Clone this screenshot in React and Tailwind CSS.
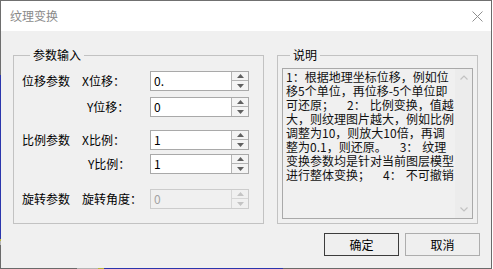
import React from "react";

function Tri({ up, color }) {
  return (
    <svg width="7" height="4" viewBox="0 0 7 4" className="block">
      {up ? (
        <polygon points="0,4 7,4 3.5,0" fill={color} />
      ) : (
        <polygon points="0,0 7,0 3.5,4" fill={color} />
      )}
    </svg>
  );
}

function Spin({ value, disabled }) {
  const arrow = disabled ? "#c4c4c4" : "#606060";
  return (
    <div
      className={`flex w-[99px] h-[20px] border ${
        disabled ? "border-[#cccccc] bg-[#f0f0f0]" : "border-[#a9a9a9] bg-white"
      }`}
    >
      <div
        className={`flex-1 flex items-center pl-[3px] text-[12px] leading-[14px] ${
          disabled ? "text-[#a3a3a3]" : "text-black"
        }`}
      >
        {value}
      </div>
      <div
        className={`w-[17px] flex flex-col border-l ${
          disabled ? "border-[#d6d6d6] bg-[#f0f0f0]" : "border-[#b4b4b4] bg-[#f4f4f4]"
        }`}
      >
        <div
          className={`h-[9px] flex items-center justify-center border-b ${
            disabled ? "border-[#d6d6d6]" : "border-[#b4b4b4]"
          }`}
        >
          <Tri up color={arrow} />
        </div>
        <div className="flex-1 flex items-center justify-center">
          <Tri color={arrow} />
        </div>
      </div>
    </div>
  );
}

function Row({ group, label, indent, value, disabled, className }) {
  return (
    <div className={`flex items-center h-[20px] ${className}`}>
      <div className="w-[60px] whitespace-nowrap">{group}</div>
      <div className={`w-[68px] whitespace-nowrap ${indent}`}>{label}</div>
      <Spin value={value} disabled={disabled} />
    </div>
  );
}

const Gap = () => <span className="inline-block w-[13px]" />;
const Sp = () => <span className="inline-block w-[4px]" />;

export default function App() {
  return (
    <div className="w-[493px] h-[269px] bg-white flex font-['Noto_Sans_CJK_SC',sans-serif] text-[12px] leading-[16px] text-black overflow-hidden">
      {/* left border */}
      <div className="w-[1px] h-[269px] flex flex-col shrink-0">
        <div className="h-[75px] bg-[#6e6e6e]" />
        <div className="h-[164px] bg-[#2b36ad]" />
        <div className="h-[2px] bg-[#b8b43c]" />
        <div className="h-[4px] bg-[#b4b4b4]" />
        <div className="flex-1 bg-[#6a6a6a]" />
      </div>
      <div className="w-[490px] flex flex-col shrink-0">
        <div className="h-[1px] bg-[#707070]" />
        {/* title bar */}
        <div className="h-[30px] bg-white flex items-center justify-between pl-[9px] pr-[8px]">
          <span className="text-[#8a8a8a] text-[12px]">纹理变换</span>
          <svg width="11" height="11" viewBox="0 0 11 11">
            <path d="M0.5 0.5 L10.5 10.5 M10.5 0.5 L0.5 10.5" stroke="#8f8f8f" strokeWidth="1" />
          </svg>
        </div>
        {/* body */}
        <div className="h-[237px] bg-[#f0f0f0] flex flex-col pt-[16px]">
          <div className="flex">
            <fieldset className="ml-[12px] w-[251px] h-[177px] border border-[#c2c2c2] pl-[8px] pt-[8px]">
              <legend className="ml-[8px] px-[3px] leading-[16px]">参数输入</legend>
              <Row group="位移参数" label="X位移：" indent="" value="0." />
              <Row group="" label="Y位移：" indent="pl-[5px]" value="0" className="mt-[6px]" />
              <Row group="比例参数" label="X比例：" indent="" value="1" className="mt-[13px]" />
              <Row group="" label="Y比例：" indent="pl-[6px]" value="1" className="mt-[4px]" />
              <Row group="旋转参数" label="旋转角度：" indent="" value="0" disabled className="mt-[15px]" />
            </fieldset>
            <fieldset className="ml-[13px] w-[201px] h-[177px] border border-[#c2c2c2] px-[4px] pt-[5px]">
              <legend className="ml-[8px] px-[3px] leading-[16px]">说明</legend>
              <div className="h-[151px] border border-[#a9a9a9] bg-[#f0f0f0] flex">
                <div className="flex-1 pl-[3px] pt-[1px] text-[12px] leading-[14px] whitespace-nowrap text-[#111]">
                  <div>1：根据地理坐标位移，例如位</div>
                  <div>移5个单位，再位移-5个单位即</div>
                  <div>
                    可还原；<Gap />2：<Sp />比例变换，值越
                  </div>
                  <div>大，则纹理图片越大，例如比例</div>
                  <div>调整为10，则放大10倍，再调</div>
                  <div>
                    整为0.1，则还原。<Gap />3：<Sp />纹理
                  </div>
                  <div>变换参数均是针对当前图层模型</div>
                  <div>
                    进行整体变换；<Gap />4：<Sp />不可撤销
                  </div>
                </div>
                <div className="w-[17px] bg-[#ececec] flex flex-col justify-between items-center pt-[6px] pb-[6px]">
                  <svg width="8" height="5" viewBox="0 0 8 5">
                    <path d="M0.5 4.5 L4 1 L7.5 4.5" stroke="#c2c2c2" fill="none" strokeWidth="1.2" />
                  </svg>
                  <svg width="8" height="5" viewBox="0 0 8 5">
                    <path d="M0.5 0.5 L4 4 L7.5 0.5" stroke="#c2c2c2" fill="none" strokeWidth="1.2" />
                  </svg>
                </div>
              </div>
            </fieldset>
          </div>
          <div className="flex justify-end gap-[6px] pr-[11px] mt-[9px]">
            <button className="w-[75px] h-[23px] border border-[#3c3c3c] bg-[#efefef] text-[12px] leading-[16px] text-black">
              确定
            </button>
            <button className="w-[75px] h-[23px] border border-[#adadad] bg-[#efefef] text-[12px] leading-[16px] text-black">
              取消
            </button>
          </div>
        </div>
        {/* bottom border */}
        <div className="h-[1px] flex">
          <div className="w-[76px] bg-[#6a6a6a]" />
          <div className="w-[21px] bg-[#b4b4b4]" />
          <div className="w-[6px] bg-[#b8b43c]" />
          <div className="w-[179px] bg-[#2b36ad]" />
          <div className="flex-1 bg-[#6a6a6a]" />
        </div>
      </div>
      <div className="w-[1px] h-[269px] bg-[#6a6a6a] shrink-0" />
      <div className="w-[1px] h-[269px] bg-white shrink-0" />
    </div>
  );
}
